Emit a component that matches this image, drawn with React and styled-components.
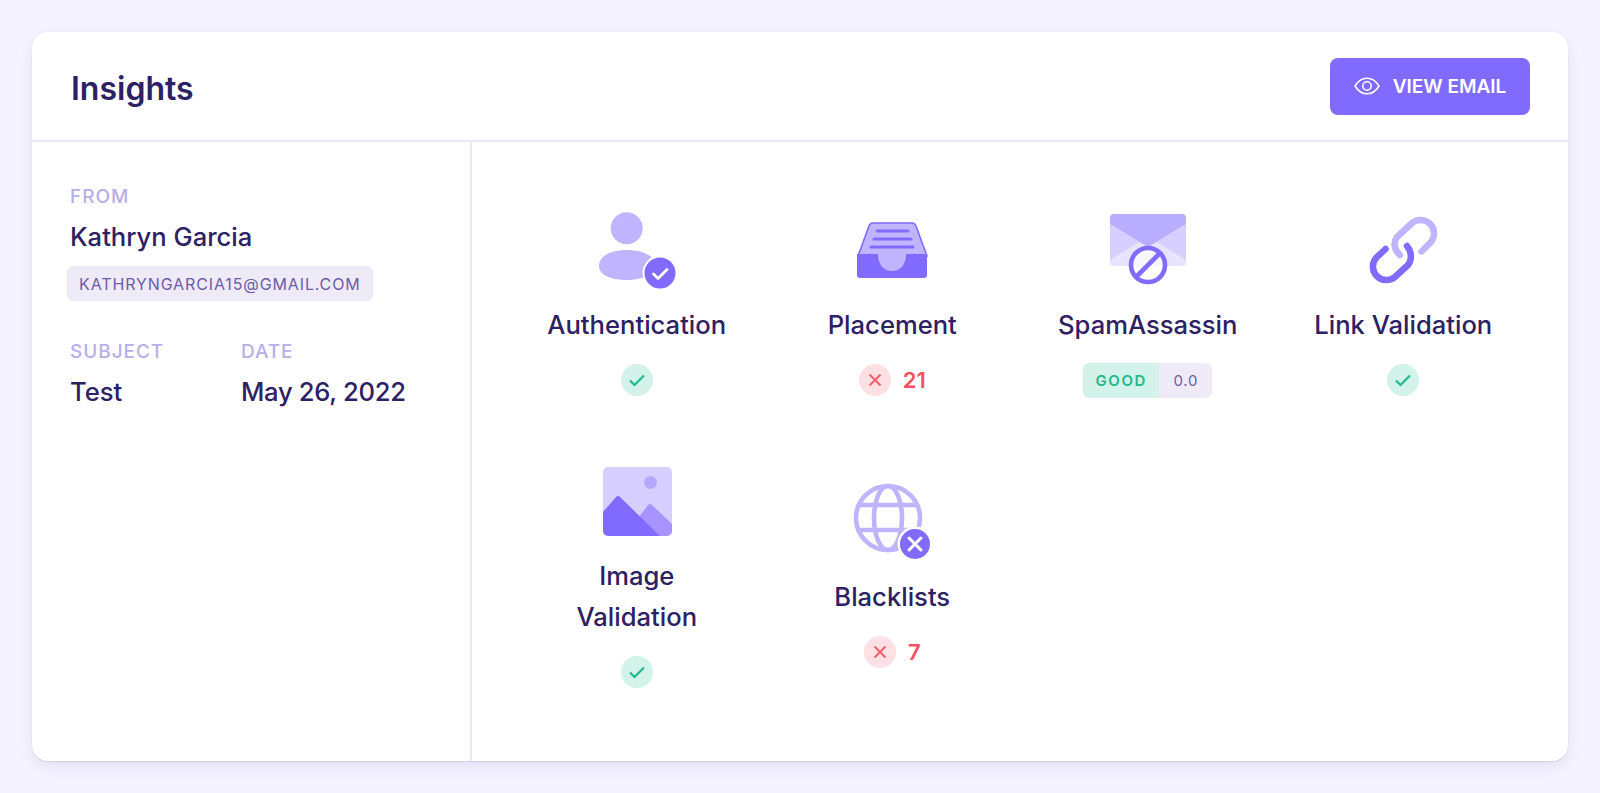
import styled, { createGlobalStyle } from "styled-components";

const GlobalStyle = createGlobalStyle`
  html, body {
    margin: 0;
    height: 100%;
    background: #f5f3ff;
    font-family: "Inter", "Liberation Sans", sans-serif;
    overflow: hidden;
  }
`;

const Page = styled.div`
  box-sizing: border-box;
  height: 793px;
  padding: 32px;
`;

const Card = styled.section`
  height: 729px;
  display: flex;
  flex-direction: column;
  background: #fff;
  border-radius: 16px;
  box-shadow: 0 1px 1px rgba(70, 50, 150, 0.12), 0 5px 14px rgba(70, 50, 150, 0.1);
`;

const Header = styled.header`
  flex: none;
  box-sizing: border-box;
  height: 110px;
  display: flex;
  align-items: center;
  justify-content: space-between;
  padding: 0 38px 0 39px;
  border-bottom: 2px solid #ebe7fa;
`;

const Title = styled.h1`
  margin: 4px 0 0;
  font-size: 32px;
  font-weight: 600;
  color: #2d2063;
`;

const ViewButton = styled.button`
  width: 200px;
  height: 57px;
  display: flex;
  align-items: center;
  justify-content: center;
  gap: 13px;
  border: 0;
  border-radius: 8px;
  background: #816bff;
  color: #fff;
  font-family: inherit;
  font-size: 19px;
  font-weight: 600;
`;

const Body = styled.div`
  flex: 1;
  display: flex;
  min-height: 0;
`;

const Sidebar = styled.aside`
  flex: none;
  box-sizing: border-box;
  width: 440px;
  padding: 43px 0 0 38px;
  border-right: 2px solid #ebe7fa;
`;

const FieldLabel = styled.div`
  font-size: 19px;
  line-height: 24px;
  font-weight: 500;
  letter-spacing: 0.95px;
  color: #b8aee8;
`;

const FieldValue = styled.div`
  margin-top: 11px;
  font-size: 25.6px;
  line-height: 34px;
  font-weight: 500;
  letter-spacing: ${({ $tight }) => ($tight ? "-0.3px" : "normal")};
  color: #2d2063;
`;

const EmailChip = styled.div`
  box-sizing: border-box;
  width: 306px;
  height: 35px;
  margin: 12px 0 0 -3px;
  padding-left: 12px;
  display: flex;
  align-items: center;
  border-radius: 6px;
  background: #eeeaf8;
  color: #6d5ca8;
  font-size: 16px;
  letter-spacing: 0.88px;
  white-space: nowrap;
`;

const MetaRow = styled.div`
  display: flex;
  margin-top: 39px;
`;

const MetaColumn = styled.div`
  width: ${({ $width }) => $width}px;
`;

const Checks = styled.main`
  flex: 1;
  box-sizing: border-box;
  padding: 58px 37px 0 37px;
  display: grid;
  grid-template-columns: repeat(4, 1fr);
  grid-auto-rows: min-content;
  row-gap: 55px;
  align-items: center;
`;

const Check = styled.div`
  display: flex;
  flex-direction: column;
  align-items: center;
  text-align: center;
`;

const CheckIcon = styled.svg`
  display: block;
  width: 110px;
  height: 100px;
`;

const CheckName = styled.div`
  max-width: 185px;
  margin-top: 4px;
  font-size: 25.6px;
  line-height: 41px;
  font-weight: 500;
  color: #2d2063;
`;

const Status = styled.div`
  height: 32px;
  margin-top: 19px;
  display: flex;
  align-items: center;
  gap: 12px;
`;

const StatusDot = styled.span`
  width: 32px;
  height: 32px;
  display: flex;
  align-items: center;
  justify-content: center;
  border-radius: 50%;
  background: ${({ $bad }) => ($bad ? "#ffe0e4" : "#d3f2ea")};
`;

const FailCount = styled.span`
  font-size: 22px;
  font-weight: 600;
  color: #f4505f;
`;

const Score = styled.div`
  display: flex;
  height: 35px;
  border-radius: 6px;
  overflow: hidden;
  font-size: 15px;
  line-height: 35px;
`;

const ScoreLabel = styled.span`
  width: 76px;
  text-align: center;
  background: #d3f2ea;
  color: #20b98c;
  font-weight: 600;
  letter-spacing: 1.6px;
`;

const ScoreValue = styled.span`
  width: 53px;
  text-align: center;
  background: #eeeaf8;
  color: #6d5ca8;
  letter-spacing: 0.7px;
`;

function Passed() {
  return (
    <StatusDot>
      <svg width="18" height="18" viewBox="0 0 18 18" fill="none">
        <path d="M2 9.5l4.5 4.5L16 4.5" stroke="#20b98c" strokeWidth="2.2" />
      </svg>
    </StatusDot>
  );
}

function Failed() {
  return (
    <StatusDot $bad>
      <svg width="16" height="16" viewBox="0 0 16 16" fill="none">
        <path d="M2.5 2.5l11 11M13.5 2.5l-11 11" stroke="#f4606e" strokeWidth="2" />
      </svg>
    </StatusDot>
  );
}

function AuthIcon() {
  return (
    <CheckIcon viewBox="2 0 110 100">
      <circle cx="46.7" cy="28.3" r="16" fill="#c0b3ff" />
      <path d="M19 66C19 55 33 50 47 50C61 50 75 55 75 65C75 75 61 80 47 80C33 80 19 76 19 66Z" fill="#c0b3ff" />
      <circle cx="80" cy="73" r="17.5" fill="#fff" />
      <circle cx="80" cy="73" r="15.5" fill="#816bff" />
      <path d="M73.5 74l4.5 4.5l9-9" fill="none" stroke="#fff" strokeWidth="2.8" strokeLinecap="round" strokeLinejoin="round" />
    </CheckIcon>
  );
}

function PlacementIcon() {
  return (
    <CheckIcon viewBox="-3 0 110 100">
      <path d="M33 23H72q3 0 4 3L87 56H18L29 26q1-3 4-3Z" fill="#c0b3ff" stroke="#816bff" strokeWidth="1.6" />
      <path d="M37 31H68M34 39H71M31 47H73" stroke="#816bff" strokeWidth="3" strokeLinecap="round" />
      <path d="M17 54H87V75q0 3-3 3H20q-3 0-3-3Z" fill="#816bff" />
      <path d="M38 54H66C66 65 60 71 52 71C44 71 38 65 38 54Z" fill="#c0b3ff" />
    </CheckIcon>
  );
}

function SpamIcon() {
  return (
    <CheckIcon viewBox="-3 0 110 100">
      <rect x="14" y="14" width="76" height="52" rx="4" fill="#e8e4ff" />
      <path d="M14 24L43 42L14 60Z" fill="#d6cfff" />
      <path d="M90 24L61 42L90 60Z" fill="#d6cfff" />
      <path d="M14 18q0-4 4-4H86q4 0 4 4V24L52 47L14 24Z" fill="#b9adff" />
      <circle cx="52" cy="65" r="17" fill="#fff" fillOpacity="0.7" stroke="#816bff" strokeWidth="4.6" />
      <path d="M40 77L64 53" stroke="#816bff" strokeWidth="4.6" />
    </CheckIcon>
  );
}

function LinkIcon() {
  return (
    <CheckIcon viewBox="-2 0 110 100">
      <g fill="none" strokeWidth="6.5" strokeLinecap="round">
        <path d="M71.5 51.5L81 42A13.5 13.5 0 0 0 62 23L47 37C43 42 44 50 50 55" stroke="#c0b3ff" />
        <path d="M35.5 49L26 58A13.5 13.5 0 0 0 45 77L58 65C62 60 62 52 57 46" stroke="#816bff" />
      </g>
    </CheckIcon>
  );
}

function ImageIcon() {
  return (
    <CheckIcon viewBox="-3 -4 110 100">
      <rect x="18" y="12" width="69" height="69" rx="5" fill="#d6cfff" />
      <circle cx="65.5" cy="27.5" r="6.5" fill="#b5a7ff" />
      <path d="M54 62L63 50q2-2 4 0L87 69V76a5 5 0 0 1-5 5H75Z" fill="#a894ff" />
      <path d="M18 57L31 42q2-2 4 0L75 81H23a5 5 0 0 1-5-5Z" fill="#816bff" />
    </CheckIcon>
  );
}

function GlobeIcon() {
  return (
    <CheckIcon viewBox="-3 2 110 100">
      <g fill="none" stroke="#c0b3ff" strokeWidth="4.6">
        <circle cx="48" cy="48" r="32" />
        <ellipse cx="48" cy="48" rx="14" ry="32" />
        <path d="M19 35H77M19 60H77" />
      </g>
      <circle cx="75" cy="74" r="17.5" fill="#fff" />
      <circle cx="75" cy="74" r="15" fill="#816bff" />
      <path d="M69 68L81 80M81 68L69 80" stroke="#fff" strokeWidth="3" strokeLinecap="round" />
    </CheckIcon>
  );
}

function App() {
  return (
    <Page>
      <GlobalStyle />
      <Card>
        <Header>
          <Title>Insights</Title>
          <ViewButton>
            <svg width="26" height="18" viewBox="0 0 26 18" fill="none" stroke="#fff" strokeWidth="1.5">
              <path d="M1 9C4 4 8 1.2 13 1.2S22 4 25 9C22 14 18 16.8 13 16.8S4 14 1 9Z" />
              <circle cx="13" cy="9" r="4.2" />
            </svg>
            VIEW EMAIL
          </ViewButton>
        </Header>
        <Body>
          <Sidebar>
            <FieldLabel>FROM</FieldLabel>
            <FieldValue>Kathryn Garcia</FieldValue>
            <EmailChip>KATHRYNGARCIA15@GMAIL.COM</EmailChip>
            <MetaRow>
              <MetaColumn $width={171}>
                <FieldLabel>SUBJECT</FieldLabel>
                <FieldValue>Test</FieldValue>
              </MetaColumn>
              <MetaColumn $width={200}>
                <FieldLabel>DATE</FieldLabel>
                <FieldValue $tight>May 26, 2022</FieldValue>
              </MetaColumn>
            </MetaRow>
          </Sidebar>
          <Checks>
            <Check>
              <AuthIcon />
              <CheckName>Authentication</CheckName>
              <Status>
                <Passed />
              </Status>
            </Check>
            <Check>
              <PlacementIcon />
              <CheckName>Placement</CheckName>
              <Status>
                <Failed />
                <FailCount>21</FailCount>
              </Status>
            </Check>
            <Check>
              <SpamIcon />
              <CheckName>SpamAssassin</CheckName>
              <Status>
                <Score>
                  <ScoreLabel>GOOD</ScoreLabel>
                  <ScoreValue>0.0</ScoreValue>
                </Score>
              </Status>
            </Check>
            <Check>
              <LinkIcon />
              <CheckName>Link Validation</CheckName>
              <Status>
                <Passed />
              </Status>
            </Check>
            <Check>
              <ImageIcon />
              <CheckName>Image Validation</CheckName>
              <Status>
                <Passed />
              </Status>
            </Check>
            <Check>
              <GlobeIcon />
              <CheckName>Blacklists</CheckName>
              <Status>
                <Failed />
                <FailCount>7</FailCount>
              </Status>
            </Check>
          </Checks>
        </Body>
      </Card>
    </Page>
  );
}

export default App;
